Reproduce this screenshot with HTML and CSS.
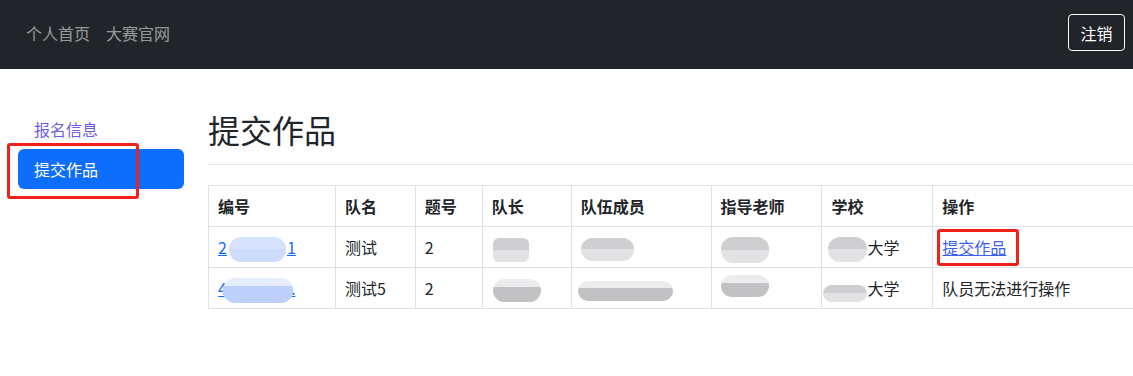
FILE: index.html
```html
<!DOCTYPE html>
<html lang="zh-CN">
<head>
<meta charset="utf-8">
<title>提交作品</title>
<link rel="stylesheet" href="styles.css">
</head>
<body>
<nav class="topbar">
  <div class="nav-links">
    <a class="nav-link" href="#">个人首页</a>
    <a class="nav-link" href="#">大赛官网</a>
  </div>
  <button class="btn-logout" type="button">注销</button>
</nav>
<div class="layout">
  <aside class="sidebar">
    <a class="pill visited" href="#">报名信息</a>
    <a class="pill active" href="#">提交作品</a>
  </aside>
  <main class="content">
    <div class="page-header">
      <h2 class="page-title">提交作品</h2>
    </div>
    <table class="works">
      <colgroup>
        <col class="c1"><col class="c2"><col class="c3"><col class="c4"><col class="c5"><col class="c6"><col class="c7"><col class="c8">
      </colgroup>
      <thead>
        <tr><th>编号</th><th>队名</th><th>题号</th><th>队长</th><th>队伍成员</th><th>指导老师</th><th>学校</th><th>操作</th></tr>
      </thead>
      <tbody>
        <tr>
          <td><a class="id-link" href="#">2<span class="blob blue b1"></span>1</a></td>
          <td>测试</td>
          <td>2</td>
          <td><span class="blob grey g-cap1"></span></td>
          <td><span class="blob grey g-mem1"></span></td>
          <td><span class="blob grey g-tch1"></span></td>
          <td><span class="blob grey g-sch1"></span>大学</td>
          <td><a class="op-link" href="#">提交作品</a></td>
        </tr>
        <tr>
          <td><a class="id-link" href="#">4<span class="blob blue b2"></span>.</a></td>
          <td>测试5</td>
          <td>2</td>
          <td><span class="blob grey2 g-cap2"></span></td>
          <td><span class="blob grey2 g-mem2"></span></td>
          <td><span class="blob grey2 g-tch2"></span></td>
          <td><span class="blob grey g-sch2"></span>大学</td>
          <td>队员无法进行操作</td>
        </tr>
      </tbody>
    </table>
  </main>
</div>
<div class="mark mark-side"></div>
<div class="mark mark-op"></div>
</body>
</html>
```
FILE: styles.css
```css
* { box-sizing: border-box; }

body {
  margin: 0;
  font-family: "Noto Sans CJK SC", "Noto Sans", sans-serif;
  font-size: 16px;
  line-height: 1.5;
  color: #212529;
  background: #fff;
  overflow: hidden;
  position: relative;
}

.topbar {
  height: 69px;
  background: #212529;
  display: flex;
  align-items: center;
  justify-content: space-between;
  padding: 0 8px 4px 26px;
}

.nav-links {
  display: flex;
  gap: 16px;
}

.nav-link {
  color: rgba(255, 255, 255, 0.55);
  text-decoration: none;
}

.btn-logout {
  font-family: inherit;
  font-size: 16px;
  line-height: 1.5;
  color: #fff;
  background: transparent;
  border: 1px solid #f8f9fa;
  border-radius: 4px;
  padding: 5px 11px;
  height: 37px;
  width: 57px;
  display: flex;
  align-items: center;
  justify-content: center;
}

.layout {
  display: flex;
}

.sidebar {
  width: 208px;
  flex: none;
  padding: 40px 24px 0 18px;
  display: flex;
  flex-direction: column;
}

.pill {
  display: block;
  padding: 8px 16px;
  height: 40px;
  border-radius: 6px;
  text-decoration: none;
}

.pill.visited { color: #6f5bea; }

.pill.active {
  background: #0d6efd;
  color: #fff;
}

.content {
  flex: none;
  width: 1000px;
}

.page-header {
  border-bottom: 1px solid #e6e7e9;
  padding-bottom: 8px;
  margin-top: 41px;
}

.page-title {
  margin: 0 0 8px;
  font-size: 32px;
  font-weight: 400;
  line-height: 38px;
}

.works {
  margin-top: 20px;
  border-collapse: collapse;
  width: 1000px;
}

.works col.c1 { width: 127px; }
.works col.c2 { width: 80px; }
.works col.c3 { width: 67px; }
.works col.c4 { width: 89px; }
.works col.c5 { width: 140px; }
.works col.c6 { width: 111px; }
.works col.c7 { width: 111px; }
.works col.c8 { width: 275px; }

.works th,
.works td {
  border: 1px solid #dee2e6;
  padding: 8px 9px;
  height: 41px;
  line-height: 24px;
  text-align: left;
  vertical-align: middle;
  white-space: nowrap;
}

.works th { font-weight: 700; }

.id-link,
.op-link {
  color: #0d6efd;
  text-decoration: underline;
}

.op-link { color: #3b5ff5; }

.blob {
  display: inline-block;
  vertical-align: middle;
  border-radius: 12px;
  filter: blur(0.6px);
  margin-top: -6px;
  margin-bottom: -6px;
}

.blue { background: linear-gradient(#d6e2fd 0 50%, #cddbfc 50% 100%); }
.grey { background: linear-gradient(#cfcfd1 0 50%, #e2e2e4 50% 100%); }
.grey2 { background: linear-gradient(#ececee 0 35%, #c2c2c5 35% 100%); }

.b1 { width: 57px; height: 25px; margin-left: 2px; margin-right: 1px; }
.b2 { width: 70px; height: 25px; margin-left: -4px; margin-right: -2px; background: linear-gradient(#e6edfd 0 30%, #bcd0fb 30% 100%); }

.g-cap1 { width: 36px; height: 24px; margin-left: 1px; border-radius: 6px; }
.g-cap2 { width: 48px; height: 23px; margin-left: 1px; }
.g-mem1 { width: 53px; height: 23px; }
.g-mem2 { width: 95px; height: 20px; margin-left: -3px; }
.g-tch1 { width: 48px; height: 26px; }
.g-tch2 { width: 48px; height: 22px; position: relative; top: -5px; }
.g-sch1 { width: 39px; height: 25px; margin-left: -3px; }
.g-sch2 { width: 44px; height: 17px; margin-left: -8px; position: relative; top: 3px; }

.mark {
  position: absolute;
  border: 3px solid #f0201a;
  border-radius: 3px;
  pointer-events: none;
}

.mark-side {
  left: 7px;
  top: 143px;
  width: 132px;
  height: 56px;
}

.mark-op {
  left: 937px;
  top: 229px;
  width: 82px;
  height: 37px;
}
```
